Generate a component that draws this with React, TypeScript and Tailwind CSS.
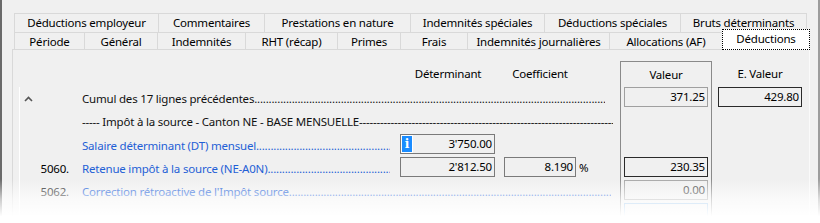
const DOTS = '.'.repeat(220)
const DASHES = '-'.repeat(160)

const row1Tabs = [
  { label: 'Déductions employeur', w: 'w-[144px]' },
  { label: 'Commentaires', w: 'w-[106px]' },
  { label: 'Prestations en nature', w: 'w-[146px]' },
  { label: 'Indemnités spéciales', w: 'w-[134px]' },
  { label: 'Déductions spéciales', w: 'w-[136px]' },
  { label: 'Bruts déterminants', w: 'w-[127px] border-r' },
]

const row2Tabs = [
  { label: 'Période', w: 'w-[70px]' },
  { label: 'Général', w: 'w-[73px]' },
  { label: 'Indemnités', w: 'w-[88px]' },
  { label: 'RHT (récap)', w: 'w-[92px]' },
  { label: 'Primes', w: 'w-[63px]' },
  { label: 'Frais', w: 'w-[67px]' },
  { label: 'Indemnités journalières', w: 'w-[142px]' },
  { label: 'Allocations (AF)', w: 'w-[113px]' },
]

function Box({ value, className = '' }: { value: string; className?: string }) {
  return (
    <div className={`h-[20px] border bg-[#f0f0f0] pr-[2px] text-right leading-[18px] ${className}`}>{value}</div>
  )
}

function Leader({ text, fill, className = '' }: { text: string; fill: string; className?: string }) {
  return (
    <div className={`flex h-[20px] overflow-hidden whitespace-nowrap pt-[2px] leading-[20px] ${className}`}>
      <span>{text}</span>
      <span className="flex-1 overflow-hidden">{fill}</span>
    </div>
  )
}

function ChevronUp() {
  return (
    <svg width="9" height="6" viewBox="0 0 9 6" className="mt-[9px]">
      <polyline points="1,5 4.5,1.5 8,5" fill="none" stroke="#555" strokeWidth="1.6" />
    </svg>
  )
}

export default function App() {
  return (
    <div className="relative w-[820px] h-[223px] overflow-hidden bg-[#f0f0f0] font-['Noto_Sans',sans-serif] text-[11.5px] tracking-[-0.2px] text-black">
      <div className="flex h-full flex-col border-l-2 border-r-2 border-l-[#6a6a6a] border-r-[#9c9c9c] pt-[13px]">
        {/* back row of tabs */}
        <div className="ml-[12px] flex h-[19px]">
          {row1Tabs.map((t) => (
            <div key={t.label} className={`${t.w} border-l border-t border-[#d9d9d9] text-center leading-[18px]`}>
              {t.label}
            </div>
          ))}
        </div>

        {/* front row of tabs */}
        <div className="ml-[12px] flex h-[17px] items-end">
          {row2Tabs.map((t) => (
            <div key={t.label} className={`${t.w} h-[17px] border-l border-t border-[#d9d9d9] text-center leading-[17px]`}>
              {t.label}
            </div>
          ))}
          <div className="relative z-10 mb-[-1px] h-[21px] w-[88px] border border-dotted border-black bg-white text-center leading-[18px]">
            Déductions
          </div>
        </div>

        {/* panel */}
        <div className="ml-[10px] flex w-[798px] flex-1 border-l border-r border-t border-l-[#d9d9d9] border-r-[#fafafa] border-t-[#d9d9d9] pt-[11px]">
          {/* left part */}
          <div className="w-[607px]">
            <div className="flex h-[26px] items-center">
              <div className="w-[387px]" />
              <div className="w-[96px] text-center">Déterminant</div>
              <div className="w-[8px]" />
              <div className="w-[72px] text-center">Coefficient</div>
            </div>

            <div className="ml-[6px] h-full border-l border-white">
              {/* row 1 */}
              <div className="flex h-[23px] items-start">
                <div className="w-[62px] pl-[4px]">
                  <ChevronUp />
                </div>
                <Leader text="Cumul des 17 lignes précédentes" fill={DOTS} className="w-[523px] text-[#111]" />
              </div>

              {/* row 2 */}
              <div className="flex h-[24px] items-start">
                <div className="w-[62px]" />
                <Leader text="----- Impôt à la source - Canton NE - BASE MENSUELLE " fill={DASHES} className="w-[531px] text-[#111]" />
              </div>

              {/* row 3 */}
              <div className="flex h-[23px] items-start">
                <div className="w-[62px]" />
                <Leader text="Salaire déterminant (DT) mensuel" fill={DOTS} className="w-[308px] text-[#1f5fd6]" />
                <div className="ml-[10px] flex h-[20px] w-[95px] items-center border border-[#7a7a7a] bg-[#f0f0f0] pr-[2px]">
                  <span className="flex h-[18px] w-[12px] items-center justify-center border border-white bg-[#1a8cff] font-['DejaVu_Serif',serif] text-[12px] font-bold leading-none text-white">
                    i
                  </span>
                  <span className="flex-1 text-right">3'750.00</span>
                </div>
              </div>

              {/* row 4 */}
              <div className="flex h-[23px] items-start">
                <div className="w-[62px] pr-[13px] pt-[2px] text-right leading-[20px]">5060.</div>
                <Leader text="Retenue impôt à la source (NE-A0N)" fill={DOTS} className="w-[308px] text-[#1f5fd6]" />
                <Box value="2'812.50" className="ml-[10px] w-[95px] border-[#7a7a7a]" />
                <Box value="8.190" className="ml-[9px] w-[72px] border-[#7a7a7a]" />
                <span className="ml-[3px] pt-[1px] leading-[20px]">%</span>
              </div>

              {/* row 5 */}
              <div className="flex h-[23px] items-start">
                <div className="w-[62px] pr-[13px] pt-[2px] text-right leading-[20px] text-[#222]">5062.</div>
                <Leader text="Correction rétroactive de l'Impôt source" fill={DOTS} className="w-[529px] text-[#2a66d8]" />
              </div>
            </div>
          </div>

          {/* Valeur column */}
          <div className="w-[92px] border-l border-r border-t border-[#8a8a8a]">
            <div className="flex h-[25px] items-center justify-center">Valeur</div>
            <Box value="371.25" className="ml-[3px] w-[84px] border-[#a0a0a0]" />
            <Box value="230.35" className="ml-[3px] mt-[50px] w-[84px] border-[#2a2a2a]" />
            <Box value="0.00" className="ml-[3px] mt-[3px] w-[84px] border-[#a8a8a8] text-[#444]" />
            <Box value="" className="ml-[3px] mt-[3px] w-[84px] border-[#7fb4e6]" />
          </div>

          {/* E. Valeur column */}
          <div className="flex-1">
            <div className="flex h-[26px] w-[96px] items-center justify-center">E. Valeur</div>
            <Box value="429.80" className="ml-[6px] w-[84px] border-[#2a2a2a]" />
          </div>
        </div>
      </div>

      {/* fade towards the bottom */}
      <div className="pointer-events-none absolute inset-x-0 bottom-0 h-[44px] bg-linear-to-b from-white/0 via-white/65 via-45% to-white to-85%" />
    </div>
  )
}
